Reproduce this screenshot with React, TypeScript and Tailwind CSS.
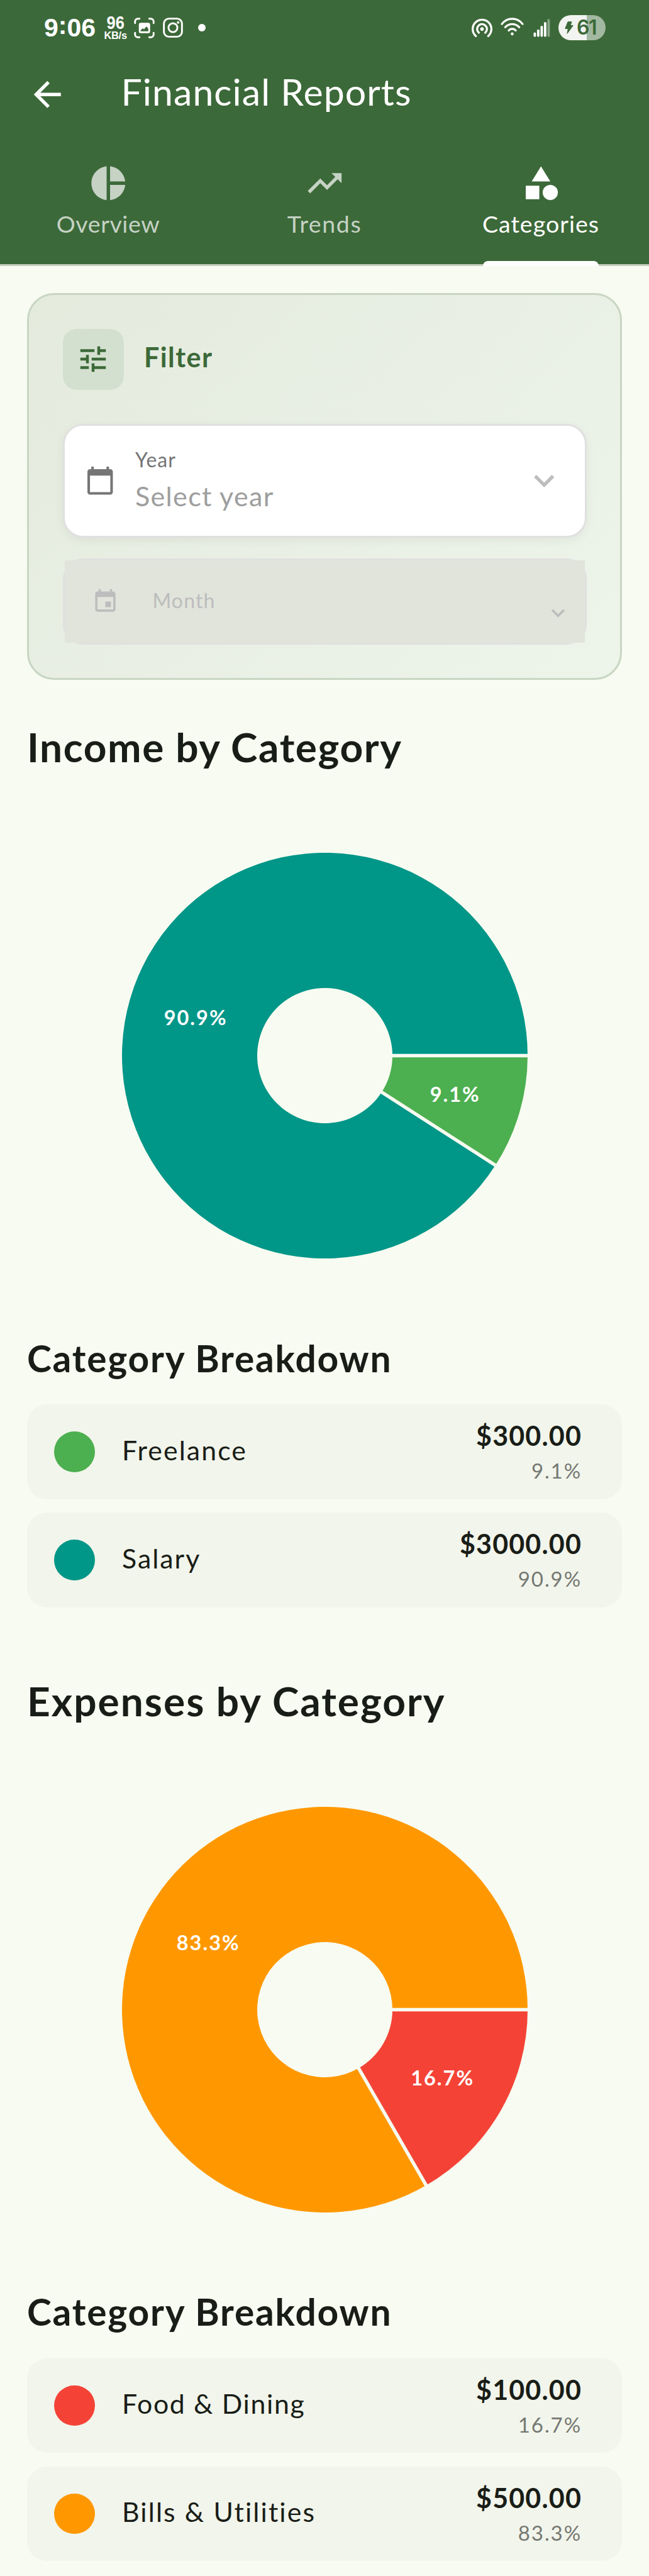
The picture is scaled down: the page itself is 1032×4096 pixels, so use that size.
import React from "react";
import {
  MdArrowBack,
  MdCalendarToday,
  MdCategory,
  MdEvent,
  MdKeyboardArrowDown,
  MdPieChart,
  MdTrendingUp,
  MdTune,
} from "react-icons/md";

type Slice = {
  name: string;
  amount: string;
  percent: string;
  share: number;
  color: string;
  tracking: string;
};

const INCOME: Slice[] = [
  { name: "Freelance", amount: "$300.00", percent: "9.1%", share: 1 / 11, color: "#4caf50", tracking: "tracking-[2.100px]" },
  { name: "Salary", amount: "$3000.00", percent: "90.9%", share: 10 / 11, color: "#009688", tracking: "tracking-[2px]" },
];

const EXPENSES: Slice[] = [
  { name: "Food & Dining", amount: "$100.00", percent: "16.7%", share: 1 / 6, color: "#f44336", tracking: "tracking-[1.650px]" },
  { name: "Bills & Utilities", amount: "$500.00", percent: "83.3%", share: 5 / 6, color: "#ff9800", tracking: "tracking-[2.100px]" },
];

function ScanIcon() {
  return (
    <svg className="ml-[11px] h-[33px] w-[33px]" viewBox="0 0 34 34" fill="none" stroke="#fff" strokeWidth="3" strokeLinecap="round">
      <path d="M1.8 9V6.5a4.700 4.700 0 0 1 4.700-4.700H9M25 1.800h2.500a4.700 4.700 0 0 1 4.700 4.700V9M32.200 25v2.500a4.700 4.700 0 0 1-4.700 4.700H25M9 32.200H6.500a4.700 4.700 0 0 1-4.700-4.700V25" />
      <rect x="8" y="8.500" width="18.500" height="17" rx="3" fill="#fff" stroke="none" />
      <path d="M11 22.500v-2l3.500-3 2 1.500 4-4.500 3 3.500v4.500z" fill="#3c6939" stroke="none" />
    </svg>
  );
}

function InstagramIcon() {
  return (
    <svg className="ml-[13px] h-[32px] w-[32px]" viewBox="0 0 33 33" fill="none" stroke="#fff" strokeWidth="3">
      <rect x="1.700" y="1.700" width="29.600" height="29.600" rx="8" />
      <circle cx="16.500" cy="16.500" r="7.300" />
      <circle cx="25" cy="8" r="2.100" fill="#fff" stroke="none" />
    </svg>
  );
}

function HotspotIcon() {
  return (
    <svg className="h-[33px] w-[33px]" viewBox="0 0 34 34" fill="none" stroke="#fff" strokeWidth="3.400" strokeLinecap="round">
      <path d="M6.800 30.200a15.300 15.300 0 1 1 20.400 0" />
      <path d="M11.700 24.700a8 8 0 1 1 10.600 0" />
      <circle cx="17" cy="18.700" r="2.900" fill="#fff" stroke="none" />
    </svg>
  );
}

function WifiIcon() {
  return (
    <svg className="-mt-[4px] ml-[13px] h-[29px] w-[37px]" viewBox="0 0 39 30" fill="none" stroke="#fff" strokeWidth="3.400" strokeLinecap="round">
      <path d="M2.200 10.400a21.600 21.600 0 0 1 34.600 0" />
      <path d="M7.800 15.800a15.700 15.700 0 0 1 23.400 0" />
      <path d="M13.700 21.300a7.500 7.500 0 0 1 11.600 0" />
      <circle cx="19.500" cy="27" r="2.400" fill="#fff" stroke="none" />
    </svg>
  );
}

function SignalIcon() {
  return (
    <svg className="ml-[15px] h-[29px] w-[27px]" viewBox="0 0 28 30" fill="#fff">
      <rect x="0.500" y="22.500" width="4" height="7" rx="1.500" />
      <rect x="6.200" y="17.500" width="4" height="12" rx="1.500" />
      <rect x="11.900" y="11.500" width="4" height="18" rx="1.500" />
      <rect x="17.600" y="5.500" width="4" height="24" rx="1.500" />
      <rect x="23.300" y="0.500" width="4" height="29" rx="1.500" opacity="0.4" />
    </svg>
  );
}

function Battery() {
  return (
    <div className="ml-[13px] flex h-[40px] w-[74.500px] items-center overflow-hidden rounded-full bg-[linear-gradient(to_right,#f1f4f0_45px,#a2b8a0_45px)] pl-[10px]">
      <svg className="h-[20px] w-[14px]" viewBox="0 0 14 20" fill="#3c6939" stroke="#3c6939" strokeWidth="1" strokeLinejoin="round">
        <path d="M5 0.700H11L9 6.500H13.300L4 19.300L5.300 11.500H0.700z" />
      </svg>
      <span className="ml-[5px] font-['Inter',sans-serif] text-[32px] leading-[40px] font-semibold tracking-[-1.500px] text-[#3c6939]">61</span>
    </div>
  );
}

function StatusBar() {
  return (
    <div className="flex h-[88px] items-center pr-[69.500px] pl-[70px] text-white">
      <span className="font-['Liberation_Sans',Arial,sans-serif] text-[41px] leading-[44px] font-bold">
        9<span className="inline-block -translate-y-[4px]">:</span>06
      </span>
      <div className="ml-[13px] flex w-[37px] flex-col items-center font-['Liberation_Sans',Arial,sans-serif] font-bold">
        <span className="scale-x-[0.850] text-[30px] leading-[22px]">96</span>
        <span className="mt-[1px] text-[16.500px] leading-[16px] tracking-[-0.300px]">KB/s</span>
      </div>
      <ScanIcon />
      <InstagramIcon />
      <span className="ml-[24px] size-[12px] rounded-full bg-white" />
      <div className="ml-auto flex items-center">
        <HotspotIcon />
        <WifiIcon />
        <SignalIcon />
        <Battery />
      </div>
    </div>
  );
}

function Header() {
  return (
    <header className="h-[423px] border-b-[3px] border-[#c3cebd] bg-[#3c6939]">
      <StatusBar />
      <div className="flex h-[124px] items-center pl-[43px] text-white">
        <MdArrowBack className="size-[64.500px]" />
        <h1 className="ml-[85px] pb-[8px] text-[59px] leading-[70px] tracking-[1.060px]">Financial Reports</h1>
      </div>
      <nav className="grid h-[208px] grid-cols-3 text-[37.500px] leading-[48px] text-[#c5d2c4]">
        <div className="flex flex-col items-center pt-[47px]">
          <MdPieChart className="size-[64.500px]" />
          <span className="mt-[8px] tracking-[0.600px]">Overview</span>
        </div>
        <div className="flex flex-col items-center pt-[47px]">
          <MdTrendingUp className="size-[64.500px]" />
          <span className="mt-[8px] tracking-[1.600px]">Trends</span>
        </div>
        <div className="flex flex-col items-center pt-[47px] text-white">
          <MdCategory className="size-[64.500px]" />
          <span className="mt-[8px] tracking-[1.050px]">Categories</span>
          <span className="-mb-[3px] mt-auto h-[8px] w-[184px] rounded-t-[8px] bg-white" />
        </div>
      </nav>
    </header>
  );
}

function FilterCard() {
  return (
    <section className="mt-[43px] h-[615px] rounded-[43px] border-[3px] border-[#c8d6c3] bg-[linear-gradient(135deg,#e4ebdd_0%,#e9efe4_50%,#edf4e9_100%)] p-[53.500px]">
      <div className="flex items-center">
        <div className="flex size-[97px] items-center justify-center rounded-[21.500px] bg-[#d4e0cf] text-[#3c6939]">
          <MdTune className="size-[54px]" />
        </div>
        <h2 className="ml-[32.500px] pb-[6px] text-[43px] leading-[50px] font-bold tracking-[1.450px] text-[#3c6939]">Filter</h2>
      </div>
      <div className="mt-[54px] flex h-[181.500px] items-center rounded-[32px] border-[3px] border-[#e0e0e0] bg-white px-[32px] shadow-[0_5px_16px_rgba(0,0,0,0.05)]">
        <MdCalendarToday className="size-[48.500px] text-[#757575]" />
        <div className="ml-[32px] flex flex-col">
          <span className="text-[32px] leading-[50px] tracking-[1px] text-[#757575]">Year</span>
          <span className="text-[43px] leading-[66px] tracking-[1.350px] text-[#9e9e9e]">Select year</span>
        </div>
        <MdKeyboardArrowDown className="ml-auto size-[64.500px] text-[#bdbdbd]" />
      </div>
      <div className="mt-[32.500px] h-[137px] rounded-[32px] bg-[#e0e0e0] p-[3px]">
        <div className="flex h-full items-center bg-[#e1e4db] pr-[21px] pl-[43px] text-[#bdbdbd]">
          <MdEvent className="size-[43px]" />
          <span className="ml-[54px] pb-[2px] text-[32px] leading-[40px] tracking-[1.150px]">Month</span>
          <MdKeyboardArrowDown className="mb-[26px] ml-auto size-[43px] self-end" />
        </div>
      </div>
    </section>
  );
}

const R_OUTER = 322.5;
const R_INNER = 107.5;
const R_LABEL = 215;

function point(radius: number, turn: number) {
  const angle = turn * 2 * Math.PI;
  return [R_OUTER + radius * Math.cos(angle), R_OUTER + radius * Math.sin(angle)];
}

function slicePath(from: number, to: number) {
  const large = to - from > 0.5 ? 1 : 0;
  const [x1, y1] = point(R_OUTER, from);
  const [x2, y2] = point(R_OUTER, to);
  const [x3, y3] = point(R_INNER, to);
  const [x4, y4] = point(R_INNER, from);
  return `M${x1} ${y1}A${R_OUTER} ${R_OUTER} 0 ${large} 1 ${x2} ${y2}L${x3} ${y3}A${R_INNER} ${R_INNER} 0 ${large} 0 ${x4} ${y4}Z`;
}

function DonutChart({ slices }: { slices: Slice[] }) {
  let turn = 0;
  const parts = slices.map((slice) => {
    const from = turn;
    turn += slice.share;
    return { slice, from, to: turn };
  });
  return (
    <svg className="mx-auto mt-[128px] block size-[645px]" viewBox="0 0 645 645">
      {parts.map(({ slice, from, to }) => (
        <path key={slice.name} d={slicePath(from, to)} fill={slice.color} />
      ))}
      {parts.map(({ slice, from }) => {
        const [x1, y1] = point(R_INNER - 2, from);
        const [x2, y2] = point(R_OUTER + 2, from);
        return <line key={slice.name} x1={x1} y1={y1} x2={x2} y2={y2} stroke="#f8fbf1" strokeWidth="5.400" />;
      })}
      {parts.map(({ slice, from, to }) => {
        const [x, y] = point(R_LABEL, (from + to) / 2);
        return (
          <text key={slice.name} x={x + 0.9} y={y + 12.5} textAnchor="middle" fill="#fff" className="text-[32.500px] font-bold tracking-[2px]">
            {slice.percent}
          </text>
        );
      })}
    </svg>
  );
}

function BreakdownRow({ slice }: { slice: Slice }) {
  return (
    <li className="flex h-[150.500px] items-center rounded-[32px] bg-[#f2f5eb] pr-[64px] pl-[43px]">
      <span className="size-[64.500px] rounded-full" style={{ backgroundColor: slice.color }} />
      <span className={`ml-[43.500px] pb-[5px] text-[42.800px] leading-[50px] text-[#191d17] ${slice.tracking}`}>{slice.name}</span>
      <div className="ml-auto flex flex-col items-end">
        <span className="text-[43px] leading-[60px] font-bold tracking-[1.150px] text-[#191d17]">{slice.amount}</span>
        <span className="text-[33px] leading-[50px] tracking-[1.900px] text-[#757873]">{slice.percent}</span>
      </div>
    </li>
  );
}

function CategorySection({ title, titleClass, slices }: { title: string; titleClass: string; slices: Slice[] }) {
  return (
    <section className="text-[#191d17]">
      <h2 className={`text-[64px] leading-[80px] font-bold whitespace-nowrap ${titleClass}`}>{title}</h2>
      <DonutChart slices={slices} />
      <h3 className="mt-[121.500px] text-[58.700px] leading-[74px] font-bold tracking-[1.800px]">Category Breakdown</h3>
      <ul className="mt-[36.500px] flex flex-col gap-[21.500px]">
        {slices.map((slice) => (
          <BreakdownRow key={slice.name} slice={slice} />
        ))}
      </ul>
    </section>
  );
}

export default function App() {
  return (
    <div className="h-[4096px] w-[1032px] overflow-hidden bg-[#f8fbf1] font-['Lato',sans-serif]">
      <Header />
      <main className="px-[43px]">
        <FilterCard />
        <CategorySection title="Income by Category" titleClass="mt-[67px] tracking-[1.600px]" slices={INCOME} />
        <CategorySection title="Expenses by Category" titleClass="mt-[109px] tracking-[2px]" slices={EXPENSES} />
      </main>
    </div>
  );
}
